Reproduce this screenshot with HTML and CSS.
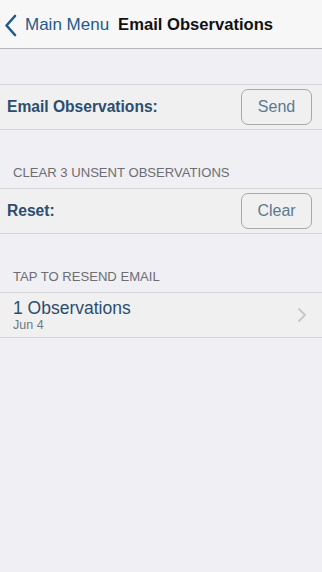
FILE: index.html
```html
<!DOCTYPE html>
<html lang="en">
<head>
  <meta charset="UTF-8" />
  <title>Email Observations</title>
  <link rel="stylesheet" href="styles.css">
</head>
<body>
  <div class="navbar">
    <a class="back" href="#">
      <svg class="back-icon" width="13" height="23" viewBox="0 0 13 23"><path d="M11 2 L2.5 11.5 L11 21" fill="none" stroke="#1f5a8c" stroke-width="2.6" stroke-linecap="round" stroke-linejoin="round"/></svg>
      <span>Main Menu</span>
    </a>
    <div class="title">Email Observations</div>
  </div>

  <div class="spacer"></div>

  <div class="row">
    <div class="label">Email Observations:</div>
    <button class="btn">Send</button>
  </div>

  <div class="section-header">CLEAR 3 UNSENT OBSERVATIONS</div>
  <div class="row">
    <div class="label">Reset:</div>
    <button class="btn">Clear</button>
  </div>

  <div class="section-header">TAP TO RESEND EMAIL</div>
  <div class="row item">
    <div class="item-text">
      <div class="item-title">1 Observations</div>
      <div class="item-sub">Jun 4</div>
    </div>
    <svg class="chevron" width="8" height="14" viewBox="0 0 8 14"><path d="M1 1 L7 7 L1 13" fill="none" stroke="#c7c7cc" stroke-width="1.8" stroke-linecap="round" stroke-linejoin="round"/></svg>
  </div>
</body>
</html>
```

FILE: styles.css
```css
body {
  margin: 0;
  background: #efeff4;
  font-family: "Liberation Sans", Arial, sans-serif;
  width: 322px;
  height: 572px;
}
.navbar {
  height: 46px;
  background: #f7f7f8;
  border-bottom: 1px solid #b7b7bb;
  display: flex;
  align-items: center;
  padding-top: 2px;
}
.back {
  display: flex;
  align-items: center;
  color: #1f5a8c;
  text-decoration: none;
  font-size: 17px;
  padding-left: 4px;
}
.back-icon {
  margin-right: 8px;
}
.title {
  margin-left: 9px;
  font-size: 16.6px;
  font-weight: bold;
  color: #111;
}
.spacer {
  height: 35px;
}
.row {
  display: flex;
  align-items: center;
  justify-content: space-between;
  background: #f0f0f0;
  border-top: 1px solid #d6d6da;
  border-bottom: 1px solid #d6d6da;
  height: 44px;
  padding: 0 10px 0 7px;
}
.label {
  font-size: 15.6px;
  font-weight: bold;
  color: #2b4d6f;
}
.btn {
  width: 71px;
  height: 36px;
  border: 1px solid #a9a9ad;
  border-radius: 7px;
  background: #f0f0f0;
  color: #5a7a90;
  font-family: "Liberation Sans", Arial, sans-serif;
  font-size: 16px;
  padding: 0;
}
.section-header {
  font-size: 13.1px;
  color: #6d6d72;
  padding: 35px 13px 8px;
  line-height: 15px;
}
.item {
  padding-left: 13px;
  padding-right: 16px;
}
.item-title {
  font-size: 17.5px;
  color: #2b4d6f;
  line-height: 20px;
}
.item-sub {
  font-size: 12.5px;
  color: #6a7a88;
  line-height: 15px;
}
```
